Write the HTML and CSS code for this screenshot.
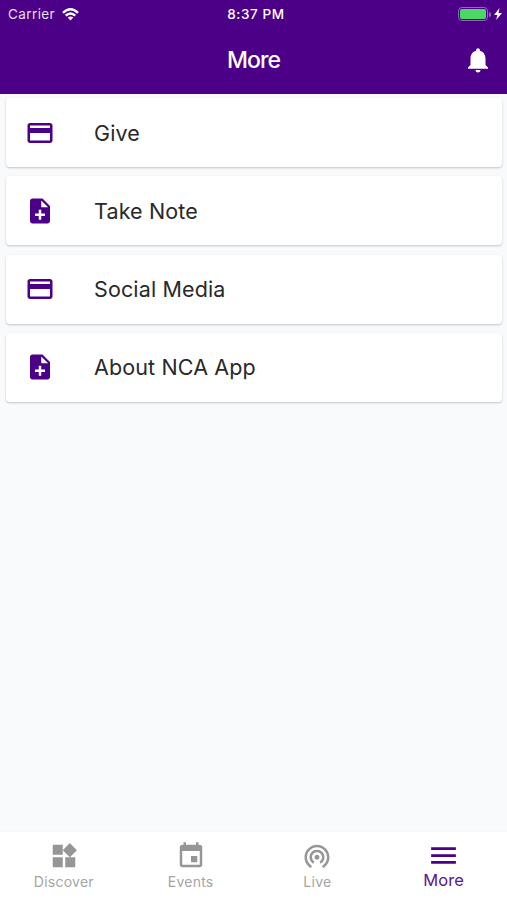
FILE: index.html
```html
<!DOCTYPE html>
<html lang="en">
<head>
<meta charset="utf-8">
<title>More</title>
<link rel="stylesheet" href="styles.css">
</head>
<body>
<svg class="defs" aria-hidden="true">
  <symbol id="card" viewBox="0 0 24 24"><path d="M20 4H4c-1.11 0-1.99.89-1.99 2L2 18c0 1.11.89 2 2 2h16c1.11 0 2-.89 2-2V6c0-1.11-.89-2-2-2zm0 14H4v-6h16v6zm0-10H4V6h16v2z"/></symbol>
  <symbol id="note" viewBox="0 0 24 24"><path d="M14 2H6c-1.1 0-1.99.9-1.99 2L4 20c0 1.1.89 2 1.99 2H18c1.1 0 2-.9 2-2V8l-6-6zm2 14h-3v3h-2v-3H8v-2h3v-3h2v3h3v2zm-3-7V3.500L18.500 9H13z"/></symbol>
</svg>
<div class="app">
  <header class="header">
    <div class="status">
      <div class="status-left"><span class="carrier">Carrier</span>
        <svg class="wifi" viewBox="0 0 17 13"><g fill="none" stroke="#fff" stroke-width="2.400"><path d="M1 4.800Q8.500-2.200 16 4.800M3.700 7.700Q8.500 3.300 13.300 7.700"/></g><path fill="#fff" d="M5.700 9.600Q8.500 7.300 11.300 9.600L8.500 12.500Z"/></svg>
      </div>
      <span class="time">8:37 PM</span>
      <div class="power">
        <span class="battery"><span class="charge"></span></span><span class="tip"></span>
        <svg class="bolt" viewBox="0 0 8 12"><path fill="#fff" d="M5.500 0 0 7h3.300L2.200 12 8 5H4.500z"/></svg>
      </div>
    </div>
    <div class="titlebar">
      <h1>More</h1>
      <svg class="bell" viewBox="0 0 24 24"><path d="M12 22c1.100 0 2-.9 2-2h-4c0 1.100.89 2 2 2zm6-6v-5c0-3.070-1.640-5.640-4.500-6.320V4c0-.83-.67-1.500-1.500-1.500s-1.500.67-1.500 1.500v.68C7.630 5.360 6 7.920 6 11v5l-2 2v1h16v-1l-2-2z"/></svg>
    </div>
  </header>
  <main class="list">
    <a class="item"><svg class="icon"><use href="#card"/></svg><span>Give</span></a>
    <a class="item"><svg class="icon"><use href="#note"/></svg><span>Take Note</span></a>
    <a class="item"><svg class="icon"><use href="#card"/></svg><span>Social Media</span></a>
    <a class="item"><svg class="icon"><use href="#note"/></svg><span>About NCA App</span></a>
  </main>
  <nav class="tabs">
    <a class="tab"><svg viewBox="0 0 24 24"><path d="M13 13v8h8v-8h-8zM3 21h8v-8H3v8zM3 3v8h8V3H3zm13.660-1.310L11 7.340 16.660 13l5.660-5.660-5.660-5.650z"/></svg><span>Discover</span></a>
    <a class="tab"><svg viewBox="0 0 24 24"><path d="M17 12h-5v5h5v-5zM16 1v2H8V1H6v2H5c-1.110 0-1.990.9-1.990 2L3 19c0 1.100.89 2 2 2h14c1.100 0 2-.9 2-2V5c0-1.100-.9-2-2-2h-1V1h-2zm3 18H5V8h14v11z"/></svg><span>Events</span></a>
    <a class="tab"><svg viewBox="0 0 24 24"><path d="M12 11c-1.100 0-2 .9-2 2s.9 2 2 2 2-.9 2-2-.9-2-2-2zm6 2c0-3.310-2.690-6-6-6s-6 2.690-6 6c0 2.220 1.210 4.150 3 5.190l1-1.740c-1.190-.7-2-1.970-2-3.450 0-2.210 1.790-4 4-4s4 1.790 4 4c0 1.480-.81 2.750-2 3.450l1 1.740c1.790-1.040 3-2.970 3-5.190zM12 3C6.480 3 2 7.480 2 13c0 3.700 2.010 6.920 4.990 8.650l1-1.730C5.610 18.530 4 15.960 4 13c0-4.420 3.580-8 8-8s8 3.580 8 8c0 2.960-1.610 5.530-4 6.920l1 1.730c2.990-1.730 5-4.950 5-8.650 0-5.520-4.480-10-10-10z"/></svg><span>Live</span></a>
    <a class="tab active"><svg viewBox="0 0 24 24"><path d="M3 18h18v-2H3v2zm0-5h18v-2H3v2zm0-7v2h18V6H3z"/></svg><span>More</span></a>
  </nav>
</div>
</body>
</html>
```
FILE: styles.css
```css
* { box-sizing: border-box; }
body { margin: 0; font-family: Inter, "Liberation Sans", sans-serif; background: #f9fafc; }
.defs { position: absolute; width: 0; height: 0; }
svg { display: block; flex: none; fill: currentColor; }
.app { height: 900px; display: flex; flex-direction: column; }
.header { height: 94px; background: #4b0087; color: #fff; }
.status { height: 27px; padding: 0 6px 0 8px; display: grid; grid-template-columns: 1fr auto 1fr; align-items: center; font-size: 13.500px; line-height: 28px; }
.status-left { display: flex; align-items: center; gap: 7px; }
.carrier { color: #eadff3; letter-spacing: .4px; font-size: 13.500px; }
.wifi { width: 17px; height: 13px; }
.time { font-weight: 500; letter-spacing: .6px; padding-left: 3px; }
.power { display: flex; align-items: center; justify-content: flex-end; }
.battery { width: 30px; height: 14px; padding: 1px; border: 1px solid #9167b8; border-radius: 4px; }
.charge { display: block; height: 10px; border-radius: 2px; background: #4bd865; }
.tip { width: 2px; height: 5px; margin-left: 1px; border-radius: 0 2px 2px 0; background: #9167b8; }
.bolt { width: 8px; height: 12px; margin-left: 3px; margin-right: -1px; }
.titlebar { height: 66px; padding: 0 14px 0 44px; display: flex; align-items: center; }
h1 { flex: 1; margin: 0; text-align: center; font-size: 23px; font-weight: 500; letter-spacing: -.9px; }
.bell { width: 30px; height: 30px; margin-top: -1px; }
.list { flex: 1; padding: 4px 5px 0 6px; display: flex; flex-direction: column; gap: 9.300px; }
.item { height: 69px; padding-left: 19px; display: flex; align-items: center; gap: 39px; background: #fff; border-radius: 4px; box-shadow: 0 1px 2px rgba(0,0,0,.19), 0 1px 4px rgba(0,0,0,.04); color: #292929; font-size: 21.500px; letter-spacing: .13px; }
.icon { width: 30px; height: 30px; color: #4b0087; }
.tabs { height: 68px; background: #fff; display: grid; grid-template-columns: repeat(4, 1fr); box-shadow: 0 -1px 2px rgba(0,0,0,.02); }
.tab { display: flex; flex-direction: column; align-items: center; padding: 9px 0 0 1px; color: #969696; font-size: 14px; letter-spacing: .25px; line-height: 21px; }
.tab svg { width: 30px; height: 30px; }
.tab span { color: #a5a5a5; }
.tab.active { color: #4b0087; font-size: 16.500px; padding: 7px 0 0; letter-spacing: .1px; }
.tab.active svg { width: 33px; height: 33px; }
.tab.active span { color: #5b1690; margin-top: -2px; }
```
